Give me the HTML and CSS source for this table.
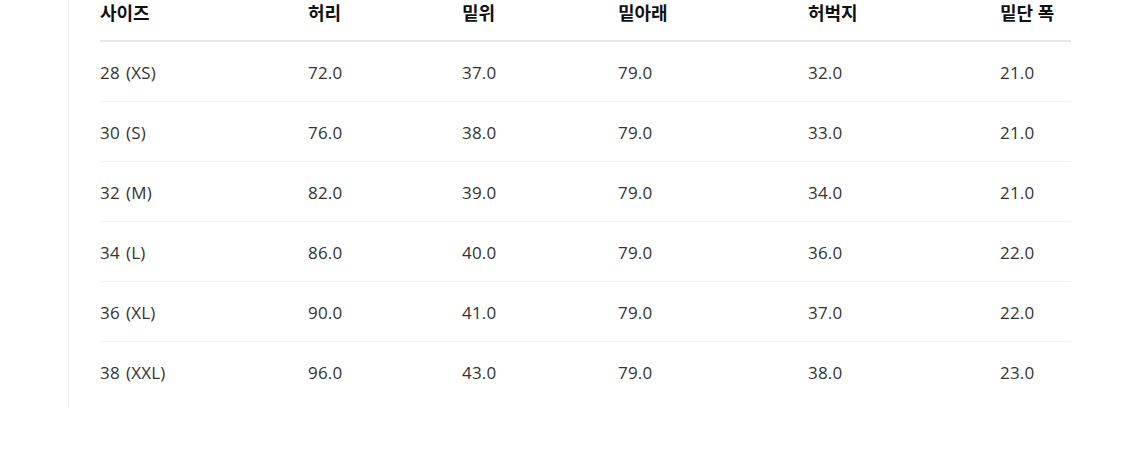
FILE: index.html
```html
<!DOCTYPE html>
<html lang="ko">
<head>
<meta charset="utf-8">
<link rel="stylesheet" href="styles.css">
</head>
<body>
<div class="page">
  <div class="panel">
    <table class="size-table">
      <colgroup>
        <col class="c1"><col class="c2"><col class="c3"><col class="c4"><col class="c5"><col class="c6">
      </colgroup>
      <thead>
        <tr><th>사이즈</th><th>허리</th><th>밑위</th><th>밑아래</th><th>허벅지</th><th>밑단 폭</th></tr>
      </thead>
      <tbody>
        <tr><td>28 (XS)</td><td>72.0</td><td>37.0</td><td>79.0</td><td>32.0</td><td>21.0</td></tr>
        <tr><td>30 (S)</td><td>76.0</td><td>38.0</td><td>79.0</td><td>33.0</td><td>21.0</td></tr>
        <tr><td>32 (M)</td><td>82.0</td><td>39.0</td><td>79.0</td><td>34.0</td><td>21.0</td></tr>
        <tr><td>34 (L)</td><td>86.0</td><td>40.0</td><td>79.0</td><td>36.0</td><td>22.0</td></tr>
        <tr><td>36 (XL)</td><td>90.0</td><td>41.0</td><td>79.0</td><td>37.0</td><td>22.0</td></tr>
        <tr><td>38 (XXL)</td><td>96.0</td><td>43.0</td><td>79.0</td><td>38.0</td><td>23.0</td></tr>
      </tbody>
    </table>
  </div>
</div>
</body>
</html>
```
FILE: styles.css
```css
html, body {
  margin: 0;
  padding: 0;
  background: #ffffff;
}
body {
  font-family: "Open Sans", "Noto Sans CJK KR", sans-serif;
  color: #222;
}
.page {
  padding-left: 68px;
  width: 1004px;
}
.panel {
  border-left: 1px solid #f3f3f3;
  padding-left: 31px;
  padding-bottom: 7px;
}
.size-table {
  border-collapse: collapse;
  width: 971px;
  table-layout: fixed;
}
.c1 { width: 208px; }
.c2 { width: 154px; }
.c3 { width: 156px; }
.c4 { width: 190px; }
.c5 { width: 192px; }
.c6 { width: 71px; }
.size-table th {
  text-align: left;
  font-weight: 700;
  font-size: 18px;
  line-height: 24px;
  color: #111;
  padding: 1px 0 15px;
  border-bottom: 2px solid #e8e8e8;
  white-space: nowrap;
}
.size-table td {
  font-size: 17px;
  line-height: 24px;
  letter-spacing: 0.2px;
  word-spacing: 1.5px;
  color: #333;
  padding: 19px 0 16px;
  border-bottom: 1px solid #f2f2f2;
  white-space: nowrap;
}
.size-table tbody tr:last-child td {
  border-bottom: none;
}
```
